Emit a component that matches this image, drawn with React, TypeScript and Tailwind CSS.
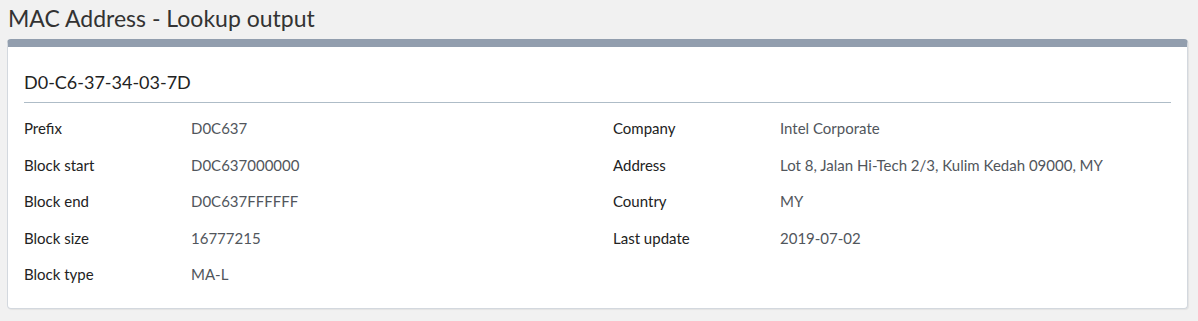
import React from 'react';

const left: [string, string][] = [
  ['Prefix', 'D0C637'],
  ['Block start', 'D0C637000000'],
  ['Block end', 'D0C637FFFFFF'],
  ['Block size', '16777215'],
  ['Block type', 'MA-L'],
];

const right: [string, string][] = [
  ['Company', 'Intel Corporate'],
  ['Address', 'Lot 8, Jalan Hi-Tech 2/3, Kulim Kedah 09000, MY'],
  ['Country', 'MY'],
  ['Last update', '2019-07-02'],
];

const App = () => {
  return (
    <div className="min-h-[321px] bg-[#f1f1f1] pl-[7px] pr-[10px] pt-[3px] pb-[11px] font-['Lato',sans-serif]">
      <h1 className="text-[23px] leading-[30px] text-[#333] pl-[1px] mb-[6px]">MAC Address - Lookup output</h1>
      <div className="bg-white rounded-[4px] border border-[#d3d8de] border-t-[8px] border-t-[#929eae] shadow-[1px_1px_1px_rgba(0,0,0,0.06)] px-[16px] pt-[24px] pb-[15px]">
        <h2 className="text-[18px] leading-[22px] text-[#222] pb-[9px] border-b border-[#aebcc7]">D0-C6-37-34-03-7D</h2>
        <div className="grid grid-cols-[167px_422px_167px_1fr] text-[15px] mt-[7px]">
          {left.map(([k, v], i) => (
            <React.Fragment key={k}>
              <div className="h-[36.5px] flex items-center text-[#222]">{k}</div>
              <div className="h-[36.5px] flex items-center text-[#51565c]">{v}</div>
              <div className="h-[36.5px] flex items-center text-[#222]">{right[i]?.[0]}</div>
              <div className="h-[36.5px] flex items-center text-[#51565c]">{right[i]?.[1]}</div>
            </React.Fragment>
          ))}
        </div>
      </div>
    </div>
  );
};

export default App;
